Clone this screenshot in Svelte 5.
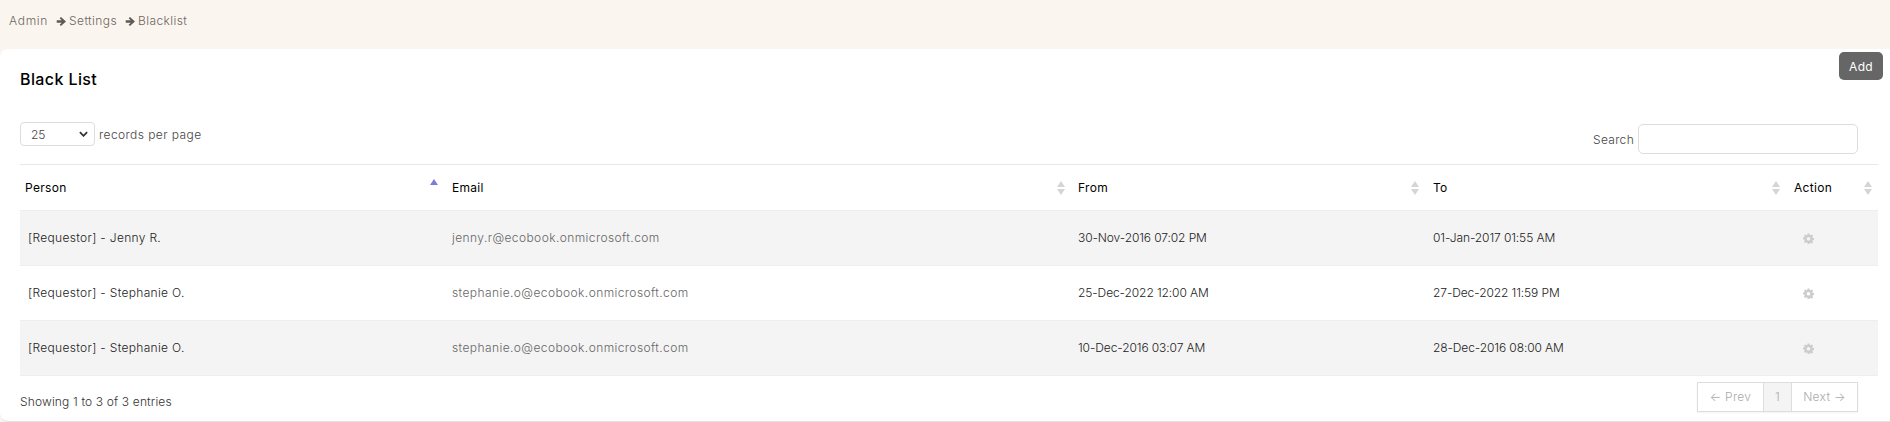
<script lang="ts">
	type Row = { person: string; email: string; from: string; to: string };

	const rows: Row[] = [
		{ person: '[Requestor] - Jenny R.', email: 'jenny.r@ecobook.onmicrosoft.com', from: '30-Nov-2016 07:02 PM', to: '01-Jan-2017 01:55 AM' },
		{ person: '[Requestor] - Stephanie O.', email: 'stephanie.o@ecobook.onmicrosoft.com', from: '25-Dec-2022 12:00 AM', to: '27-Dec-2022 11:59 PM' },
		{ person: '[Requestor] - Stephanie O.', email: 'stephanie.o@ecobook.onmicrosoft.com', from: '10-Dec-2016 03:07 AM', to: '28-Dec-2016 08:00 AM' }
	];

	const columns = ['Person', 'Email', 'From', 'To', 'Action'];
</script>

{#snippet arrow()}
	<svg class="arrow" viewBox="0 0 12 12" aria-hidden="true">
		<path d="M0.8 4.7H6.2L4 2.5 5.4 1 10.9 6 5.4 11 4 9.5 6.2 7.3H0.8Z" />
	</svg>
{/snippet}

<div class="page">
	<nav class="crumbs">
		<span class="root">Admin</span>
		<span class="crumb">{@render arrow()}Settings</span>
		<span class="crumb">{@render arrow()}Blacklist</span>
	</nav>

	<section class="card">
		<button class="add" type="button">Add</button>
		<h1>Black List</h1>

		<div class="controls">
			<label class="length">
				<span class="select">25
					<svg viewBox="0 0 10 6" aria-hidden="true"><path d="M1 1l4 4 4-4" /></svg>
				</span>
				records per page
			</label>
			<label class="search">Search <input type="text" /></label>
		</div>

		<table>
			<colgroup>
				<col class="c1" /><col class="c2" /><col class="c3" /><col class="c4" /><col class="c5" />
			</colgroup>
			<thead>
				<tr>
					{#each columns as col, i}
						<th>
							{col}
							{#if i === 0}
								<span class="sort active"><i class="up"></i></span>
							{:else}
								<span class="sort"><i class="up"></i><i class="down"></i></span>
							{/if}
						</th>
					{/each}
				</tr>
			</thead>
			<tbody>
				{#each rows as row}
					<tr>
						<td class="person">{row.person}</td>
						<td class="email">{row.email}</td>
						<td class="date">{row.from}</td>
						<td class="date">{row.to}</td>
						<td class="action">
							<svg viewBox="0 0 24 24" aria-hidden="true">
								<path fill-rule="evenodd" d="M10 1h4l.6 3.2 1.9.8L19.2 3.2 22 6l-1.8 2.7.8 1.9 3 .6v4l-3 .6-.8 1.9 1.8 2.7-2.8 2.8-2.7-1.8-1.9.8L14 24h-4l-.6-3.2-1.9-.8-2.7 1.8L2 19l1.8-2.7-.8-1.9-3-.6v-4l3-.6.8-1.9L2 6l2.8-2.8L7.5 5l1.9-.8ZM12 8.5a4 4 0 1 0 0 8 4 4 0 0 0 0-8Z" />
							</svg>
						</td>
					</tr>
				{/each}
			</tbody>
		</table>

		<div class="foot">
			<div class="info">Showing 1 to 3 of 3 entries</div>
			<div class="pager">
				<span class="prev">← Prev</span>
				<span class="num">1</span>
				<span class="next">Next →</span>
			</div>
		</div>
	</section>
</div>

<style>
	:global(body) {
		margin: 0;
		background: #fbf5ef;
	}
	.page {
		height: 422px;
		font-family: Inter, 'Noto Sans', sans-serif;
		font-size: 12px;
		font-weight: 300;
		color: #222;
		overflow: hidden;
	}
	.crumbs {
		height: 49px;
		box-sizing: border-box;
		padding: 13px 9px 0;
		display: flex;
		align-items: flex-start;
		gap: 8px;
		color: #6b6660;
		line-height: 16px;
		letter-spacing: 0.4px;
	}
	.root {
		letter-spacing: 0.7px;
	}
	.crumb {
		display: inline-flex;
		align-items: center;
		gap: 2px;
		height: 16px;
	}
	.arrow {
		width: 11px;
		height: 11px;
		fill: #5f5a55;
	}
	.card {
		position: relative;
		height: 373px;
		box-sizing: border-box;
		background: #fff;
		border-top-left-radius: 8px;
		border-bottom: 1px solid #e2e2e0;
		border-bottom-left-radius: 8px;
		padding: 0 12px 0 20px;
	}
	.add {
		position: absolute;
		top: 3px;
		right: 7px;
		width: 44px;
		height: 28px;
		border: 0;
		border-radius: 5px;
		background: #666;
		color: #fff;
		font: 400 12px Inter, sans-serif;
		letter-spacing: 0.3px;
		padding: 0;
	}
	h1 {
		margin: 0;
		padding-top: 20px;
		font-size: 16px;
		font-weight: 500;
		line-height: 20px;
		letter-spacing: 0.4px;
		color: #000;
	}
	.controls {
		display: flex;
		justify-content: space-between;
		align-items: flex-start;
		margin-top: 33px;
		height: 42px;
		padding-right: 20px;
	}
	.length {
		display: flex;
		gap: 4px;
		height: 24px;
		align-items: center;
		color: #444;
		letter-spacing: 0.42px;
		line-height: 21px;
	}
	.select {
		width: 75px;
		height: 24px;
		box-sizing: border-box;
		border: 1px solid #ddd;
		border-radius: 4px;
		padding: 0 10px;
		display: flex;
		align-items: center;
		justify-content: space-between;
		font-size: 12px;
		color: #444;
		letter-spacing: 0;
	}
	.select svg {
		width: 9px;
		height: 6px;
		margin-right: -4px;
		fill: none;
		stroke: #333;
		stroke-width: 2;
	}
	.search {
		display: flex;
		gap: 4px;
		align-items: center;
		height: 30px;
		margin-top: 2px;
		color: #444;
		letter-spacing: 0.3px;
	}
	.search input {
		width: 220px;
		height: 30px;
		box-sizing: border-box;
		border: 1px solid #ddd;
		border-radius: 5px;
		background: #fff;
		outline: none;
	}
	table {
		width: 1858px;
		table-layout: fixed;
		border-collapse: collapse;
		border-top: 1px solid #e8e8e8;
	}
	.c1 { width: 427px; }
	.c2 { width: 626px; }
	.c3 { width: 355px; }
	.c4 { width: 361px; }
	.c5 { width: 89px; }
	th {
		position: relative;
		box-sizing: border-box;
		height: 46px;
		padding: 0 5px 1px;
		text-align: left;
		font-size: 12px;
		font-weight: 400;
		letter-spacing: 0.3px;
		color: #000;
		border-bottom: 1px solid #eee;
	}
	td {
		height: 55px;
		padding: 0 5px 2px;
		box-sizing: border-box;
		border-bottom: 1px solid #eee;
		color: #222;
	}
	tbody tr:nth-child(odd) td {
		background: #f4f4f4;
	}
	td.person {
		padding-left: 8px;
		letter-spacing: 0.32px;
	}
	td.email {
		color: #666;
		letter-spacing: 0.41px;
	}
	td.date {
		letter-spacing: -0.1px;
	}
	td.action {
		padding-bottom: 0;
	}
	td.action svg {
		display: block;
		width: 11px;
		height: 11px;
		margin-left: 9px;
		fill: #ccc;
	}
	.sort {
		position: absolute;
		right: 9px;
		top: 16px;
		width: 8px;
		display: flex;
		flex-direction: column;
		gap: 2px;
	}
	th:nth-child(2) .sort {
		right: 8px;
	}
	th:last-child .sort {
		right: 6px;
	}
	.sort i {
		display: block;
		width: 0;
		height: 0;
		border-left: 4px solid transparent;
		border-right: 4px solid transparent;
	}
	.sort .up {
		border-bottom: 6px solid #d5d5d5;
	}
	.sort .down {
		border-top: 6px solid #d5d5d5;
	}
	.sort.active {
		top: 14px;
		right: 9px;
	}
	.sort.active .up {
		border-bottom-color: #7a7fdb;
	}
	.foot {
		display: flex;
		justify-content: space-between;
		padding-right: 20px;
		padding-top: 6px;
	}
	.info {
		padding-top: 11px;
		line-height: 18px;
		color: #333;
		letter-spacing: 0.15px;
	}
	.pager {
		display: flex;
		width: 161px;
		height: 30px;
		box-sizing: border-box;
		border: 1px solid #ddd;
		color: #aaa;
		line-height: 28px;
		letter-spacing: 0.3px;
		box-shadow: 0 1px 2px rgba(0, 0, 0, 0.05);
	}
	.pager span {
		box-sizing: border-box;
		text-align: center;
	}
	.prev { width: 65px; }
	.num {
		width: 29px;
		background: #f4f4f4;
		border-left: 1px solid #ddd;
		border-right: 1px solid #ddd;
	}
	.next { width: 65px; }
</style>
